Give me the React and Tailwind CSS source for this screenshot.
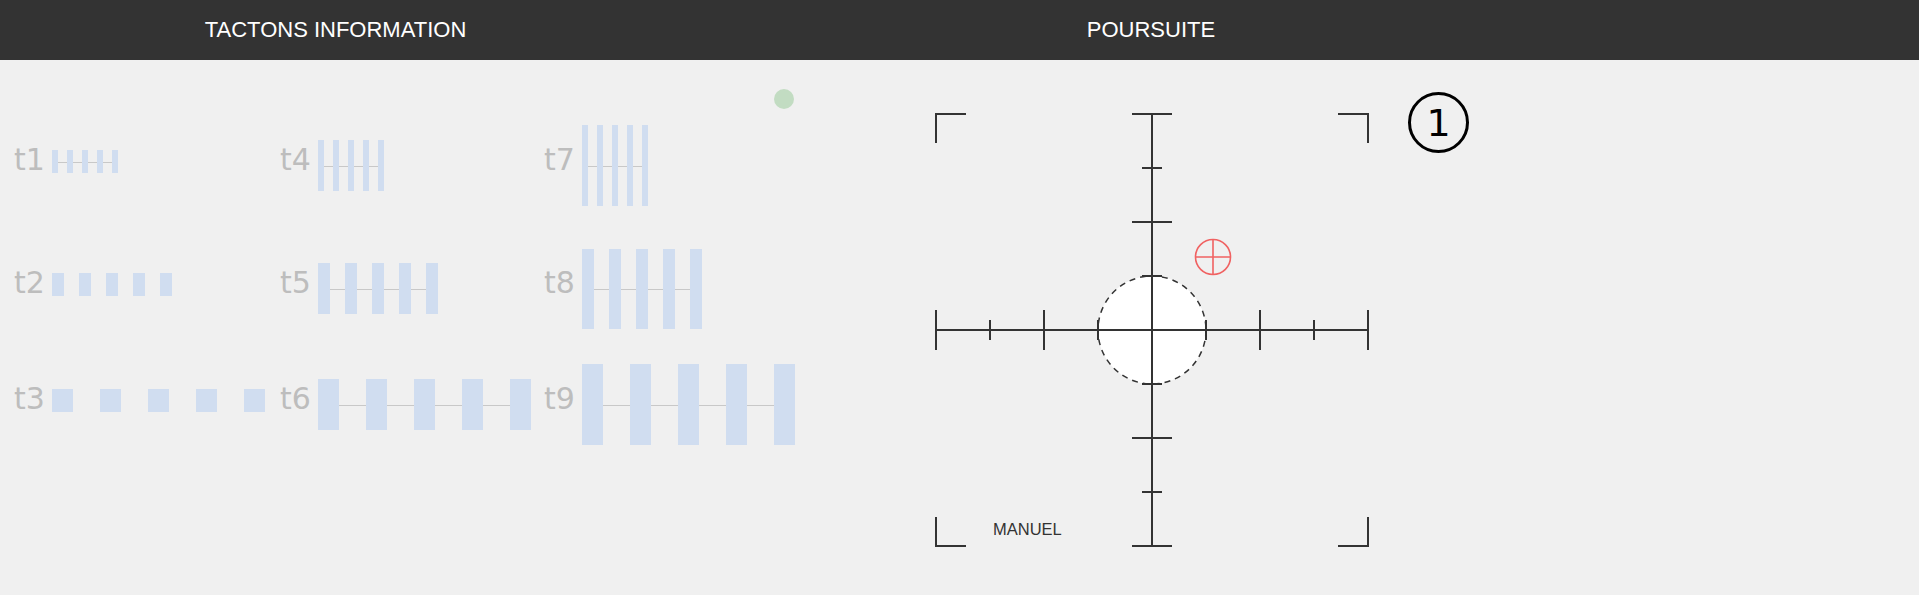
import React from "react";

const rows = [
  [
    { label: "t1", w: 6, gap: 9, h: 23, line: true },
    { label: "t4", w: 6, gap: 9, h: 51, line: true },
    { label: "t7", w: 6, gap: 9, h: 81, line: true },
  ],
  [
    { label: "t2", w: 12, gap: 15, h: 23, line: false },
    { label: "t5", w: 12, gap: 15, h: 51, line: true },
    { label: "t8", w: 12, gap: 15, h: 80, line: true },
  ],
  [
    { label: "t3", w: 21, gap: 27, h: 23, line: false },
    { label: "t6", w: 21, gap: 27, h: 51, line: true },
    { label: "t9", w: 21, gap: 27, h: 81, line: true },
  ],
];

const Tacton = ({ label, w, gap, h, line, first }) => (
  <div className={first ? "flex items-center mb-[8px]" : "flex items-center"}>
    <span
      className={
        "w-[38px] shrink-0 font-['DejaVu_Sans',sans-serif] text-[30px] leading-none text-[#bdbdbd] " +
        (first ? "mb-[4px]" : "mb-[12px]")
      }
    >
      {label}
    </span>
    <div className="relative flex" style={{ gap: gap }}>
      {line && (
        <div className="absolute left-0 right-0 top-1/2 h-px bg-[#c8c8c8]" />
      )}
      {[0, 1, 2, 3, 4].map((i) => (
        <div
          key={i}
          className="relative bg-[#d0ddf0]"
          style={{ width: w, height: h }}
        />
      ))}
    </div>
  </div>
);

const ticks = [
  { p: 4, s: 20 },
  { p: 58, s: 10 },
  { p: 112, s: 20 },
  { p: 166, s: 10 },
  { p: 274, s: 10 },
  { p: 328, s: 20 },
  { p: 382, s: 10 },
  { p: 436, s: 20 },
];

const Reticle = () => (
  <svg width="440" height="440" viewBox="0 0 440 440" fill="none" className="block shrink-0">
    <circle
      cx="220"
      cy="220"
      r="54"
      fill="#ffffff"
      stroke="#333333"
      strokeWidth="1.5"
      strokeDasharray="6 5"
    />
    <g stroke="#333333" strokeWidth="2">
      <path d="M4 33 V4 H34 M406 4 H436 V33 M4 407 V436 H34 M406 436 H436 V407" />
      <path d="M4 220 H436 M220 4 V436" />
      {ticks.map((t) => (
        <path
          key={"h" + t.p}
          d={`M${t.p} ${220 - t.s} V${220 + t.s} M${220 - t.s} ${t.p} H${220 + t.s}`}
        />
      ))}
    </g>
    <g stroke="#f06262" strokeWidth="1.6">
      <circle cx="281" cy="147" r="17.5" />
      <path d="M263.5 147 H298.5 M281 129.5 V164.5" />
    </g>
    <text
      x="61"
      y="425"
      fill="#333333"
      fontSize="16.5"
      fontFamily="'Liberation Sans', Arial, sans-serif"
    >
      MANUEL
    </text>
  </svg>
);

export default function App() {
  return (
    <div className="min-h-screen flex flex-col bg-[#f0f0f0]">
      {/* Header */}
      <div className="h-[60px] bg-[#333333] flex items-center text-white font-['Liberation_Sans',Arial,sans-serif] text-[22px] leading-none">
        <div className="w-[671px] text-center">TACTONS INFORMATION</div>
        <div className="w-[960px] text-center">POURSUITE</div>
      </div>

      <div className="flex-1 flex">
        {/* Tactons */}
        <div className="w-[808px] shrink-0 px-[14px] pt-[29px]">
          <div className="flex justify-end">
            <div className="w-5 h-5 rounded-full bg-[#c2dcc2]" />
          </div>
          {rows.map((row, ri) => (
            <div
              key={ri}
              className={
                "grid grid-cols-[266px_264px_1fr] h-[81px] items-center " +
                (ri === 0 ? "mt-[16px]" : ri === 1 ? "mt-[42px]" : "mt-[35px]")
              }
            >
              {row.map((t, ci) => (
                <Tacton key={t.label} {...t} first={ci === 0} />
              ))}
            </div>
          ))}
        </div>

        {/* Poursuite */}
        <div className="ml-[124px] mt-[50px]">
          <Reticle />
        </div>
        <div className="ml-[36px] mt-[32px]">
          <div className="w-[61px] h-[61px] rounded-full border-[3px] border-black flex items-center justify-center font-['DejaVu_Sans',sans-serif] text-[38px] leading-none text-black">
            1
          </div>
        </div>
      </div>
    </div>
  );
}
